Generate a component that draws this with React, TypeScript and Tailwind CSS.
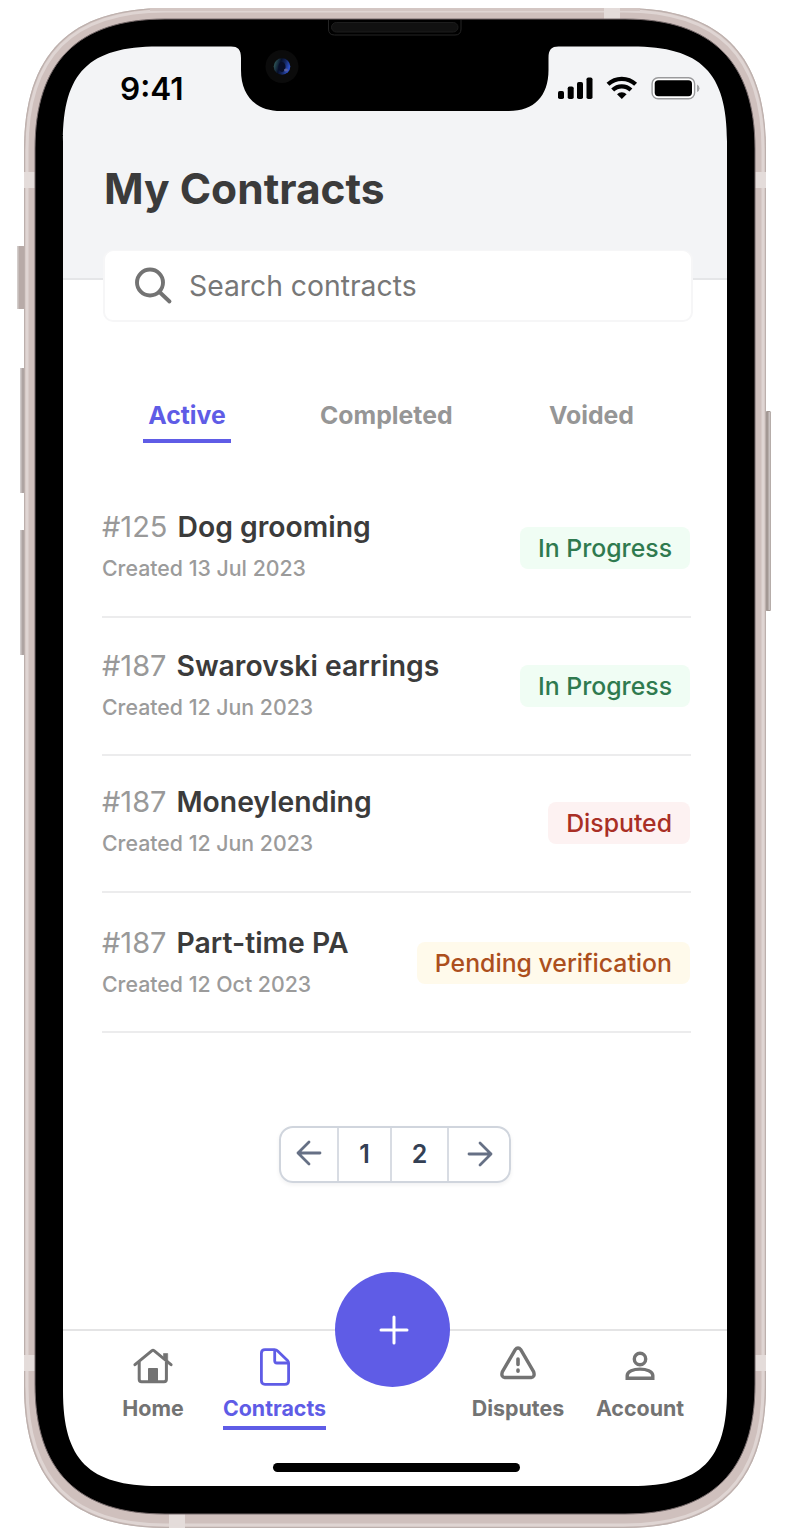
import React from "react";

type Contract = {
  id: string;
  name: string;
  created: string;
  status: string;
  badge: string;
  row: string;
};

const contracts: Contract[] = [
  { id: "#125", name: "Dog grooming", created: "Created 13 Jul 2023", status: "In Progress", badge: "mb-[13px] bg-[#f0fdf4] text-[#2f7a4f]", row: "h-[139px] pb-[34px]" },
  { id: "#187", name: "Swarovski earrings", created: "Created 12 Jun 2023", status: "In Progress", badge: "mb-[14px] bg-[#f0fdf4] text-[#2f7a4f]", row: "h-[138px] pb-[33px]" },
  { id: "#187", name: "Moneylending", created: "Created 12 Jun 2023", status: "Disputed", badge: "mb-[13px] bg-[#fdf2f2] text-[#a92f25]", row: "h-[137px] pb-[34px]" },
  { id: "#187", name: "Part-time PA", created: "Created 12 Oct 2023", status: "Pending verification", badge: "mb-[14px] bg-[#fffaeb] text-[#ac4f1d]", row: "h-[140px] pb-[33px]" },
];

const OUTER =
  "M24 150C24 54 70 8 166 8H624C720 8 766 54 766 150V1386C766 1482 720 1528 624 1528H166C70 1528 24 1482 24 1386Z";
const RING =
  "M27 150C27 56 72 11 166 11H624C718 11 763 56 763 150V1386C763 1480 718 1525 624 1525H166C72 1525 27 1480 27 1386Z";
const BODY =
  "M35 149C35 62 78 19 165 19H625C712 19 755 62 755 149V1384C755 1471 712 1514 625 1514H165C78 1514 35 1471 35 1384Z";
const SCREEN =
  "M63 141.5C63 72.5 89 46.5 158 46.5H231C238 46.5 241 49.500 241 58V70C241 96 256 111 281 111H509C534 111 548.500 96 548.500 70V58C548.500 49.500 551.500 46.500 558.500 46.500H632C701 46.500 727 72.500 727 141.500V1391C727 1460 701 1486 632 1486H158C89 1486 63 1460 63 1391Z";

function DeviceFrame() {
  return (
    <svg className="pointer-events-none absolute inset-0" width="796" height="1540" viewBox="0 0 796 1540" fill="none">
      <defs>
        <clipPath id="outer">
          <path d={OUTER} />
        </clipPath>
        <mask id="hole">
          <rect width="796" height="1540" fill="white" />
          <path d={SCREEN} fill="black" />
        </mask>
        <linearGradient id="lens" x1="0" x2="1" y1="0" y2="0.3">
          <stop offset="0" stopColor="#3f7169" />
          <stop offset="0.45" stopColor="#07102b" />
          <stop offset="0.7" stopColor="#13255c" />
          <stop offset="1" stopColor="#2c50c8" />
        </linearGradient>
      </defs>
      <g>
        <rect x="17" y="246" width="8" height="63" rx="1.500" fill="#b7aaa7" />
        <rect x="17" y="246" width="1.500" height="63" fill="#d3cdcb" />
        <rect x="20" y="368" width="5" height="125" rx="1.500" fill="#aea4a2" />
        <rect x="20" y="368" width="1.500" height="125" fill="#cfcaca" />
        <rect x="20" y="530" width="5" height="125" rx="1.500" fill="#aea4a2" />
        <rect x="20" y="530" width="1.500" height="125" fill="#cfcaca" />
        <rect x="765.500" y="411" width="5.500" height="200" rx="1.500" fill="#a39894" />
        <rect x="768.500" y="412" width="2" height="198" fill="#c9c1c0" />
      </g>
      <g mask="url(#hole)">
        <path d={OUTER} fill="#cfc0bd" />
        <path d={RING} stroke="#dfd5d3" strokeWidth="3" />
        <path d={OUTER} stroke="#bcb0ad" strokeWidth="2" clipPath="url(#outer)" />
        <path d="M150 9.500H640" stroke="#d3c6c3" strokeWidth="3" />
        <g clipPath="url(#outer)" fill="#e4dcda">
          <rect x="604" y="8" width="16" height="11" />
          <rect x="169" y="1514" width="16" height="14" />
          <rect x="24" y="172" width="11" height="16" />
          <rect x="755" y="172" width="11" height="16" />
          <rect x="24" y="1355" width="11" height="16" />
          <rect x="755" y="1355" width="11" height="16" />
        </g>
        <path d={BODY} fill="#000" stroke="#75696a" strokeWidth="1" />
      </g>
      <path d="M328.500 20V29Q328.500 35 334.500 35H455Q461 35 461 29V20" stroke="#242424" />
      <rect x="331.500" y="22.500" width="126.500" height="9.500" rx="4.750" fill="#111" stroke="#1d1d1d" />
      <circle cx="282" cy="66.500" r="16.500" fill="#0b0b0b" />
      <circle cx="282" cy="66.500" r="8.300" fill="url(#lens)" />
      <ellipse cx="282" cy="67" rx="3.500" ry="5" fill="#080e28" />
      <ellipse cx="286" cy="70" rx="2" ry="1.500" fill="#5a60a0" />
    </svg>
  );
}

function StatusIcons() {
  return (
    <svg width="142" height="24" viewBox="0 0 142 24" fill="none">
      <g fill="#000">
        <rect x="0" y="15" width="6" height="8" rx="1.800" />
        <rect x="9.700" y="10.500" width="6" height="12.500" rx="1.800" />
        <rect x="19" y="6" width="6" height="17" rx="1.800" />
        <rect x="28.500" y="1.500" width="6" height="21.500" rx="1.800" />
      </g>
      <path d="M50 8.300A20 20 0 0 1 77.600 8.300M54.700 14A13 13 0 0 1 72.900 14" stroke="#000" strokeWidth="4.200" />
      <path d="M63.800 23L59 18.200A7 7 0 0 1 68.600 18.200Z" fill="#000" />
      <rect x="94.100" y="1.700" width="42.500" height="21" rx="6" fill="#fff" stroke="#9a9a9c" strokeWidth="1.400" />
      <rect x="96.700" y="4.200" width="37.300" height="16" rx="3.600" fill="#000" />
      <path d="M139 8.500Q141.500 9.500 141.500 12.200Q141.500 15 139 16Z" fill="#a4a5a7" />
    </svg>
  );
}

function HomeIcon() {
  return (
    <svg width="40" height="36" viewBox="0 0 40 36" fill="none">
      <path d="M2 16.700L19 2.700Q20 1.900 21 2.700L38 16.700" stroke="#737373" strokeWidth="3" strokeLinecap="round" strokeLinejoin="round" />
      <path d="M6.200 14V31.300Q6.200 33.700 8.600 33.700H31Q33.400 33.700 33.400 31.300V14" stroke="#737373" strokeWidth="3" />
      <path d="M30.500 5.500H34.700V14L30.500 10Z" fill="#737373" stroke="#737373" strokeWidth="0.600" />
      <rect x="15" y="20" width="10" height="14" rx="0.800" fill="#737373" />
    </svg>
  );
}

function FileIcon() {
  return (
    <svg width="32" height="38" viewBox="0 0 32 38" fill="none" stroke="#5f5ce6" strokeWidth="2.800" strokeLinejoin="round">
      <path d="M6 1.600H15.500Q17.200 1.600 18.400 2.800L28.500 12.400Q29.600 13.500 29.600 15V32.500Q29.600 36.400 25.700 36.400H6Q2.400 36.400 2.400 32.500V5.300Q2.400 1.600 6 1.600Z" />
      <path d="M15.700 2V12.700Q15.700 15 18 15H29" />
    </svg>
  );
}

function WarningIcon() {
  return (
    <svg width="36" height="34" viewBox="0 0 36 34" fill="none" stroke="#737373" strokeLinecap="round" strokeLinejoin="round">
      <path d="M15.100 3.800Q18 .2 20.900 3.800L33.700 25.900Q35.200 31 31.200 31.500H4.800Q.8 31 2.300 25.900Z" strokeWidth="3.400" />
      <path d="M18 13V18.500M18 24V25.200" strokeWidth="3.600" />
    </svg>
  );
}

function AccountIcon() {
  return (
    <svg width="30" height="30" viewBox="0 0 30 30" fill="none" stroke="#737373" strokeWidth="3.400">
      <circle cx="15" cy="8" r="5.700" />
      <path d="M2.200 27.300V24.500C2.200 16 27.800 16 27.800 24.500V27.300Z" />
    </svg>
  );
}

const navLabel = "text-[21.4px] font-bold leading-[28px] whitespace-nowrap";

export default function App() {
  return (
    <div className="relative flex h-[1540px] w-[796px] flex-col overflow-hidden bg-white pl-[63px] font-['Inter',sans-serif]">
      <header className="mt-[44px] flex h-[236px] w-[664px] shrink-0 flex-col border-b-2 border-[#e5e6e8] bg-[#f3f4f6] px-[41px]">
        <div className="flex h-[88px] shrink-0 items-center justify-between pl-[16px] -mr-[14px]">
          <span className="pt-[2px] text-[31.500px] font-semibold leading-none text-black">9:41</span>
          <StatusIcons />
        </div>
        <h1 className="mt-[30px] shrink-0 whitespace-nowrap text-[42.5px] font-bold leading-[54px] text-[#3b3b3b]">My Contracts</h1>
        <label className="mt-[34px] flex h-[72px] w-[590px] shrink-0 -ml-[1px] items-center rounded-[10px] border-2 border-t border-[#f6f6f7] bg-white pl-[28px]">
          <svg width="40" height="40" viewBox="0 0 40 40" fill="none" stroke="#737373" strokeWidth="3.900" strokeLinecap="round">
            <circle cx="17" cy="16.500" r="13" />
            <path d="M26.500 26L36.500 35.500" />
          </svg>
          <span className="ml-[16px] pt-[2px] text-[28.3px] leading-none text-[#777]">Search contracts</span>
        </label>
      </header>

      <main className="flex w-[664px] flex-col">
        <nav className="mt-[118px] ml-[80px] flex h-[45px] items-start text-[24.8px] font-bold leading-[34px] text-[#969696]">
          <span className="flex h-[45px] w-[88px] justify-center border-b-[4px] border-[#5f5ce6] text-[#5f5ce6]">Active</span>
          <span className="ml-[89px] w-[134px] whitespace-nowrap">Completed</span>
          <span className="ml-[95px] whitespace-nowrap">Voided</span>
        </nav>

        <section className="ml-[39px] mt-[36px] w-[589px]">
          {contracts.map((c, i) => (
            <article key={i} className={"flex items-end justify-between border-b-2 border-[#ececed] " + c.row}>
              <div className="whitespace-nowrap">
                <h2 className="text-[28.3px] font-semibold leading-[36px] text-[#3b3b3b]">
                  <span className="mr-[10px] text-[29px] font-normal text-[#999]">{c.id}</span>
                  {c.name}
                </h2>
                <p className="mt-[9px] text-[21.3px] font-medium leading-[28px] text-[#9b9b9b]">{c.created}</p>
              </div>
              <span className={"mr-[1px] flex h-[42px] items-center whitespace-nowrap rounded-[8px] px-[18px] pt-px text-[24.8px] font-medium " + c.badge}>
                {c.status}
              </span>
            </article>
          ))}
        </section>

        <div className="ml-[216px] mt-[93px] flex h-[57px] w-[232px] items-stretch rounded-[14px] border-2 border-[#d0d5dd] text-[25px] font-semibold text-[#344054] shadow-[0_2px_4px_rgba(16,24,40,0.06)]">
          <button className="flex w-[58px] items-center justify-center border-r-2 border-[#d8dce3] pb-[3px]">
            <svg width="26" height="26" viewBox="0 0 26 26" fill="none" stroke="#667085" strokeWidth="2.800" strokeLinecap="round" strokeLinejoin="round">
              <path d="M24 13H2M13 2L2 13L13 24" />
            </svg>
          </button>
          <button className="w-[53px] border-r-2 border-[#d8dce3]">1</button>
          <button className="w-[57px] border-r-2 border-[#d8dce3]">2</button>
          <button className="flex flex-1 items-center justify-center pl-px pb-px">
            <svg width="26" height="26" viewBox="0 0 26 26" fill="none" stroke="#667085" strokeWidth="2.800" strokeLinecap="round" strokeLinejoin="round">
              <path d="M2 13H24M13 2L24 13L13 24" />
            </svg>
          </button>
        </div>
      </main>

      <footer className="mt-[146px] flex h-[156px] w-[664px] flex-col border-t-2 border-[#e4e4e5]">
        <div className="flex text-[#737373]">
          <a className="ml-[50px] flex w-[80px] flex-col items-center pt-[17px]">
            <HomeIcon />
            <span className={"mt-[10px] " + navLabel}>Home</span>
          </a>
          <a className="ml-[30px] flex w-[103px] flex-col items-center pt-[17px] text-[#5f5ce6]">
            <FileIcon />
            <span className={"mt-[8px] flex h-[36px] w-full justify-center border-b-[4px] border-[#5f5ce6] " + navLabel}>Contracts</span>
          </a>
          <button className="ml-[9px] -mt-[59px] flex h-[115px] w-[115px] shrink-0 items-center justify-center rounded-full bg-[#5f5ce6]">
            <svg className="ml-[2px]" width="30" height="30" viewBox="0 0 30 30" stroke="white" strokeWidth="3" strokeLinecap="round">
              <path d="M15 2V28M2 15H28" />
            </svg>
          </button>
          <a className="ml-[21px] flex w-[94px] flex-col items-center pt-[15px]">
            <WarningIcon />
            <span className={"mt-[14px] " + navLabel}>Disputes</span>
          </a>
          <a className="ml-[30px] flex w-[90px] flex-col items-center pt-[20px]">
            <AccountIcon />
            <span className={"mt-[13px] " + navLabel}>Account</span>
          </a>
        </div>
        <div className="ml-[210px] mt-[33px] h-[9px] w-[247px] rounded-full bg-black" />
      </footer>
      <DeviceFrame />
    </div>
  );
}
